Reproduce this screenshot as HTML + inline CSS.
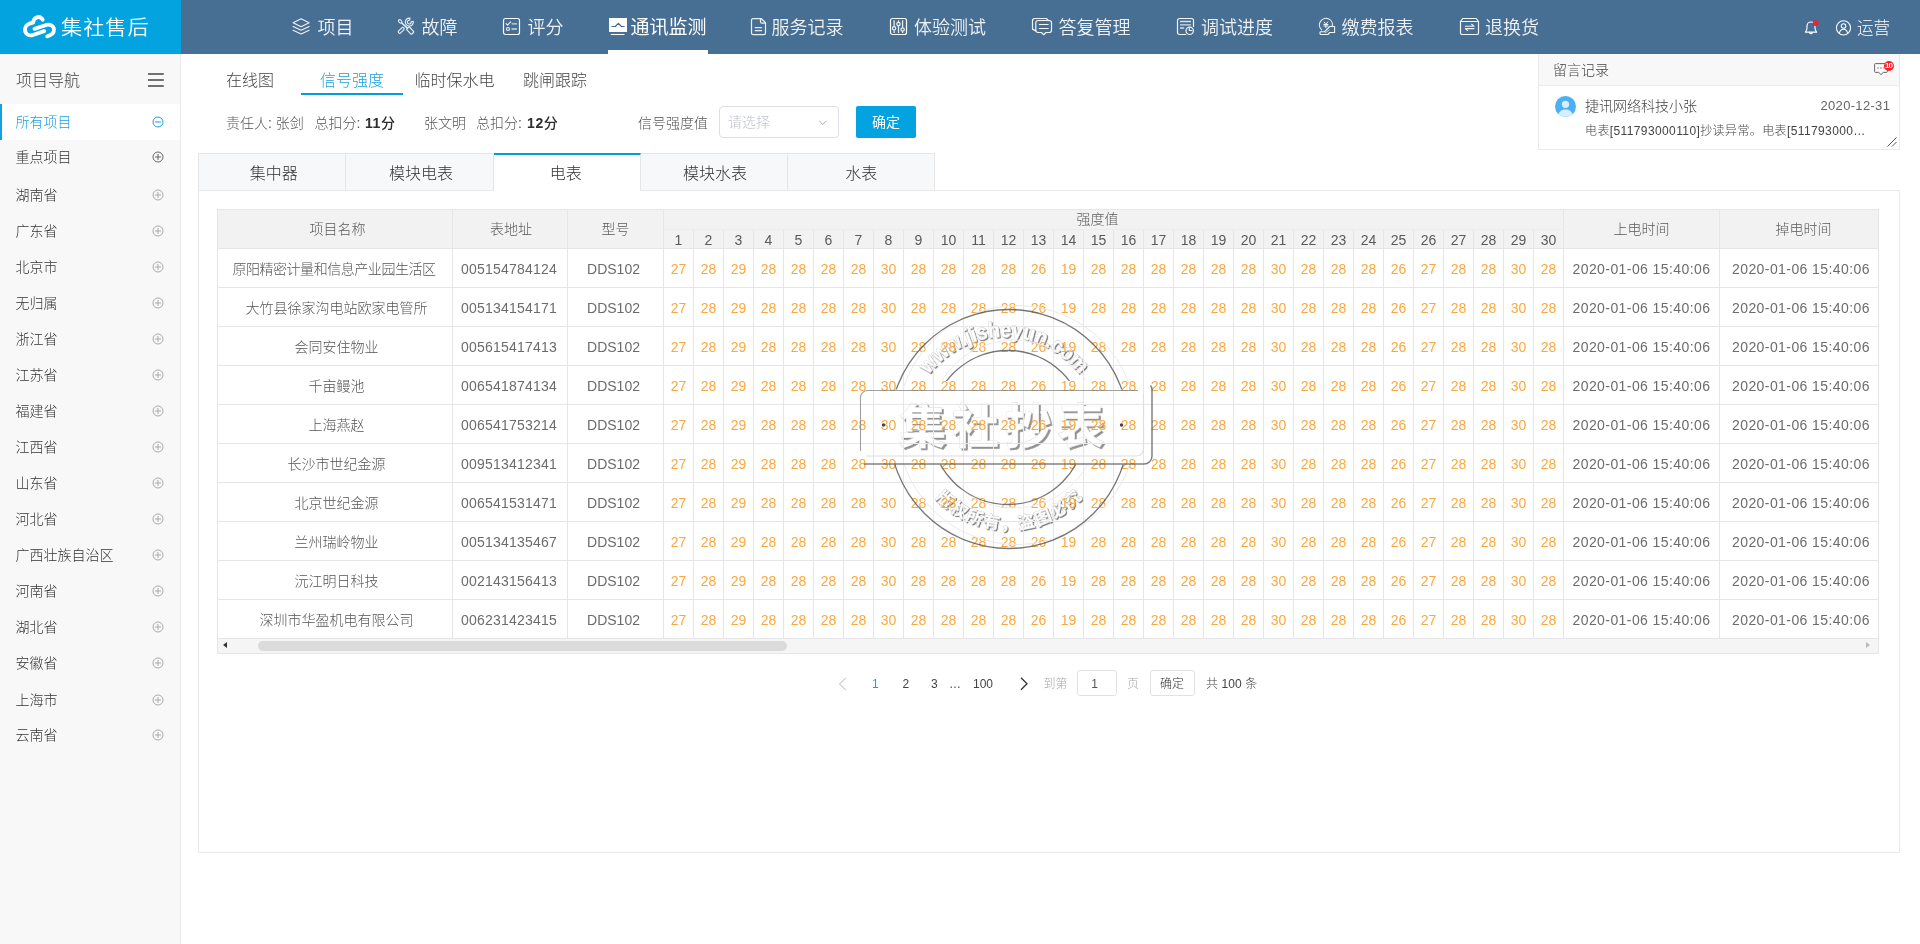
<!DOCTYPE html>
<html lang="zh-CN"><head><meta charset="utf-8"><title>集社售后 - 通讯监测 - 信号强度</title>
<style>
*{box-sizing:border-box;margin:0;padding:0}
html,body{width:1920px;height:944px;overflow:hidden;background:#fff}
body{position:relative;font-family:"Liberation Sans","Noto Sans CJK SC",sans-serif;font-size:14px;color:#333;-webkit-font-smoothing:antialiased}
svg{display:block}
i{font-style:normal;display:block}
/* header */
#hdr{position:absolute;left:0;top:0;width:1920px;height:54px;background:#476e93}
#logo{position:absolute;left:0;top:0;width:181px;height:54px;background:#03a3e0}
#logo svg{position:absolute;left:22px;top:14px}
#logo span{position:absolute;left:60.500px;top:1px;line-height:54px;font-size:20px;color:#fff;font-weight:350;letter-spacing:.9px;transform:scaleX(1.06);transform-origin:0 50%;white-space:nowrap;font-family:"Liberation Sans","Noto Sans CJK SC",sans-serif}
.ni{position:absolute;top:2px;height:52px;line-height:52px;font-size:18px;color:#eef2f6;white-space:nowrap;font-family:"Liberation Sans","Noto Sans CJK SC",sans-serif;font-weight:350}
.ni.on{font-size:19px;font-weight:400;color:#fff}
.nic{position:absolute;overflow:visible}
#nul{position:absolute;left:608px;top:50px;width:100px;height:4px;background:#fff}
/* sidebar */
#side{position:absolute;left:0;top:54px;width:181px;height:890px;background:#f8f8f8;border-right:1px solid #ebebeb}
.stitle{position:absolute;left:16px;top:2px;line-height:50px;font-size:16px;color:#444;font-family:"Liberation Sans","Noto Sans CJK SC",sans-serif;font-weight:300}
.burger{position:absolute;left:148px;top:18.700px}
.si{position:absolute;left:0;width:180px;height:36px;line-height:36px;font-size:14px;color:#333;font-family:"Liberation Sans","Noto Sans CJK SC",sans-serif;font-weight:300}
.si span{position:absolute;left:15.500px;top:0}
.si svg{position:absolute;left:151.5px;top:12px;stroke:#aaa}
.si.dk svg{stroke:#666}
.si.act{background:#fff;color:#1a9fe0;border-left:2px solid #0ea2e0}
.si.act span{left:13.500px}
.si.act svg{left:149.5px;stroke:#1a9fe0}
/* main */
#main{position:absolute;left:0;top:0;width:1920px;height:944px;pointer-events:none;will-change:transform}
.tabs1 span{position:absolute;top:66px;line-height:30px;font-size:16px;color:#444;white-space:nowrap;font-family:"Liberation Sans","Noto Sans CJK SC",sans-serif;font-weight:300}
.tabs1 span.on{color:#1a9fe0}
.tabs1 .ul{position:absolute;left:301px;top:93px;width:102px;height:2px;background:#039ddf}
.info span{position:absolute;top:108px;line-height:30px;font-size:14px;color:#555;white-space:nowrap;font-family:"Liberation Sans","Noto Sans CJK SC",sans-serif;font-weight:300}
.info b{color:#2e2e2e;font-weight:700;letter-spacing:.6px}
.sel{position:absolute;left:719px;top:106px;width:120px;height:32px;border:1px solid #dcdfe6;border-radius:4px;background:#fff}
.sel span{position:absolute;left:8px;top:0;line-height:30px;font-size:14px;color:#c0c4cc;font-weight:300}
.sel svg{position:absolute;left:98px;top:12.500px}
.btn{position:absolute;left:856px;top:106px;width:60px;height:32px;border-radius:2px;background:#02a3e0;color:#fff;font-size:14px;line-height:32px;text-align:center}
.tabs2{position:absolute;left:198px;top:153px;width:737px;height:38px;display:flex;border-left:1px solid #e6e6e6;border-top:1px solid #e6e6e6;background:#f7f8fa}
.tabs2 div{flex:0 0 147.300px;width:147.300px;height:37px;line-height:36px;padding-top:2px;text-align:center;font-size:16px;color:#333;border-right:1px solid #e6e6e6;font-family:"Liberation Sans","Noto Sans CJK SC",sans-serif;font-weight:300}
.tabs2 div.on{background:#fff;border-top:2px solid #039ddf;margin-top:-1px;height:38px;line-height:33px;position:relative;z-index:2}
.panel{position:absolute;left:198px;top:190px;width:1702px;height:663px;border:1px solid #e9e9e9}
/* table */
.tb{position:absolute;left:217px;top:209px;width:1661px;table-layout:fixed;border-collapse:collapse;border-spacing:0}
.tb th,.tb td{border:1px solid #e6e6e6;text-align:center;font-weight:300;white-space:nowrap;overflow:visible;padding:0}
.tb th{background:#f2f2f2;color:#5a5a5a;font-size:14px}
.tb .h1{height:20px}
.tb .h2{height:19px}
.tb .h1 th{line-height:19px}
.tb .h1 th.qd{border-bottom-color:#ececec;line-height:17px;padding-right:32px}
.tb .h2 th{line-height:16px;padding-top:2px;border-top:none}
.tb td{height:39px;line-height:36px;padding-top:2px;color:#6c6c6c;font-size:14px}
.tb td.v{color:#f9a93f}
.tb td.nm{color:#555;padding-left:3px}
.tb td.sq{letter-spacing:-.45px;padding-left:0;padding-right:2px}
.tb td.ad{letter-spacing:.22px;padding-right:2px}
.tb td.md{padding-right:4px}
.tb td.dt{letter-spacing:.42px}
.sbar{position:absolute;left:217px;top:639px;width:1662px;height:15px;background:#f5f5f5;border:1px solid #e6e6e6;border-top:none}
.sbar .thumb{position:absolute;left:40px;top:2px;width:529px;height:10px;border-radius:5px;background:#dbdbdb}
.sbar .la{position:absolute;left:5px;top:3px;border:3.5px solid transparent;border-right:4.5px solid #333;border-left:none}
.sbar .ra{position:absolute;left:1648px;top:3px;border:3.5px solid transparent;border-left:4.5px solid #bbb;border-right:none}
.pager span,.pager .ipt,.pager svg{position:absolute}
.pager span{top:672px;line-height:24px;font-size:12px;color:#444;white-space:nowrap;font-weight:300}
.pager span.cur{color:#1a9fe0}
.pager span.g{color:#aaa}
.pager .ipt{top:670px;height:26px;border:1px solid #e2e2e2;border-radius:3px;line-height:26px;text-align:center;font-size:12px;color:#555;font-weight:300}
/* message */
#msg{position:absolute;left:1538px;top:54px;width:362px;height:96px;border:1px solid #e9e9e9;border-top:none;background:#fff}
#msg .mh{height:32px;line-height:33px;background:#f8f8f8;border-bottom:1px solid #ebebeb;padding-left:14px;font-size:14px;color:#444;font-weight:300;font-family:"Liberation Sans","Noto Sans CJK SC",sans-serif}
#msg .chat{position:absolute;left:335px;top:9px}
#msg .badge{position:absolute;left:345px;top:7px;width:10px;height:10px;border-radius:5px;background:#f5222d;color:#fff;font-size:8px;font-weight:700;line-height:10.500px;text-align:center;letter-spacing:-.8px;text-indent:-.8px}
#msg .ava{position:absolute;left:16px;top:42px}
#msg .mn{position:absolute;left:46px;top:41px;line-height:22px;font-size:14px;color:#444;font-weight:300;white-space:nowrap}
#msg .md2{position:absolute;left:281.500px;top:41px;line-height:22px;font-size:13px;color:#666;font-weight:300;letter-spacing:.32px;white-space:nowrap}
#msg .mt{position:absolute;left:46px;top:67px;line-height:20px;font-size:12px;color:#444;font-weight:300;white-space:nowrap;letter-spacing:.39px}
#msg .rsz{position:absolute;right:2px;bottom:2px}

.tb th.c1{padding-left:5px}
.tb th.c2{padding-left:2px}
.tb th.c5{padding-left:9px}
.tb td.d2{padding-left:4px}
.tabs2 div.s1{text-indent:3px}
.tabs2 div.s3{text-indent:-2px}
.tabs2 div.s4{text-indent:2px}
.info b em{font-style:normal;font-weight:500}
#hdr,#side,#msg{will-change:transform}

</style></head>
<body>
<div id="hdr">
<div id="logo">
<svg width="36" height="26" viewBox="0 0 36 26"><g fill="none" stroke="#fff" stroke-width="3.800" stroke-linecap="round" stroke-linejoin="round"><path d="M20.600 5.700C19.400 3.400 17 2.700 14.900 3.300 12.600 4 11.300 6 11.100 8.500 7.200 9 3 11.400 3 15.600 3 20 7 22.400 11 21L22.200 17.100"/><path d="M12.500 14.900L23.500 11.200C27.500 9.800 32 11.600 32 15.600 32 19.300 29.200 21.400 25.200 22.300"/></g></svg>
<span>集社售后</span>
</div>
<!-- nav icons -->
<svg class="nic" style="left:292px;top:17px" width="18" height="18" viewBox="-0.1 -0.5 18 18"><g fill="none" stroke="#eef2f6" stroke-width="1.100" stroke-linejoin="round" stroke-linecap="round"><path d="M9 1.200L17 5.200 9 9.200 1 5.200z"/><path d="M1 8.900L9 12.700 17 8.900"/><path d="M1 12.700L9 16.500 17 12.700"/></g></svg>
<span class="ni" style="left:317.500px">项目</span>

<svg class="nic" style="left:397px;top:17px" width="18" height="18" viewBox="-0 -0.5 18 18"><g fill="none" stroke="#e9eef3" stroke-width="1.150" stroke-linejoin="round" stroke-linecap="round"><ellipse cx="3.200" cy="3.900" rx="2.100" ry="1.350" transform="rotate(45 3.200 3.900)"/><path d="M4.800 5.500L10.300 10.600" stroke-width="1.500"/><rect x="-3.600" y="-1.900" width="7.200" height="3.800" rx=".8" transform="translate(13.200 13.100) rotate(47)"/><rect x="-3.500" y="-1.400" width="7" height="2.800" rx="1.300" transform="translate(4.200 12.900) rotate(-45)"/><path d="M16.240 3.910A4 4 0 1 1 12.990 .660L12.630 2.730A1.900 1.900 0 1 0 14.170 4.270z"/></g></svg>
<span class="ni" style="left:421.500px">故障</span>

<svg class="nic" style="left:502px;top:17px" width="18" height="18" viewBox="-0.5 -0.5 18 18"><g fill="none" stroke="#e9eef3" stroke-width="1.25" stroke-linejoin="round" stroke-linecap="round"><rect x="1" y="1" width="16" height="16" rx="2" stroke="#fff" stroke-width="1.200"/><path d="M3.600 6.200l1.400 1.400 3.100-3.200" stroke-width="1.200"/><path d="M9 6.300h5.400M9 11.500h5.400" stroke-linecap="butt" stroke-width="1.300" opacity=".85"/><circle cx="5.500" cy="11.500" r="1.500" stroke-width="1.200"/></g></svg>
<span class="ni" style="left:527.500px">评分</span>

<svg class="nic" style="left:609px;top:17px" width="18" height="18" viewBox="-0 -0.5 18 18"><rect x="0" y=".5" width="18" height="14" fill="#fff"/><path d="M3 9h3.300l3.100-3.200 3.100 3.200h2.700" fill="none" stroke="#41688e" stroke-width="1.200" stroke-linecap="round" stroke-linejoin="round"/><path d="M1.800 17h13.700" stroke="#fff" stroke-width="1.100"/></svg>
<span class="ni on" style="left:630.500px">通讯监测</span>
<i id="nul"></i>

<svg class="nic" style="left:750px;top:17px" width="18" height="18" viewBox="-0 -0.5 18 18"><g fill="none" stroke="#e9eef3" stroke-width="1.25" stroke-linejoin="round" stroke-linecap="round"><path d="M3.100 1h8.100l4.300 4.300V15.400a1.600 1.600 0 0 1-1.600 1.600H3.100a1.600 1.600 0 0 1-1.600-1.600V2.600A1.600 1.600 0 0 1 3.100 1z"/><path d="M10.500 1.200v3a1.300 1.300 0 0 0 1.300 1.300h3.400"/><path d="M4.800 10h7.300M4.800 13h7.300" stroke-linecap="butt"/></g></svg>
<span class="ni" style="left:771.500px">服务记录</span>

<svg class="nic" style="left:889px;top:17px" width="18" height="18" viewBox="-0.5 -0.5 18 18"><g fill="none" stroke="#eef2f6" stroke-width="1.200" stroke-linejoin="round" stroke-linecap="round"><rect x="1" y="1" width="16" height="16" rx="2" stroke="#fff"/><path d="M4.600 2.800v6M4.600 12.800v2.800M9 2.800v1.800M9 8.600v7M13.100 2.800v7.200M13.100 14v1.600" stroke-linecap="butt"/><circle cx="4.600" cy="10.800" r="1.700"/><circle cx="9" cy="6.600" r="1.700"/><circle cx="13.100" cy="12" r="1.700"/></g></svg>
<span class="ni" style="left:914px">体验测试</span>

<svg class="nic" style="left:1031px;top:17px" width="22" height="18" viewBox="-0 -0.5 22 18"><g fill="none" stroke="#f2f5f8" stroke-width="1.200" stroke-linejoin="round" stroke-linecap="round"><path d="M4.800 13.400L1.500 11.600V3.200A2.200 2.200 0 0 1 3.700 1H15.400L17.400 3"/><path d="M7 3H18.300A2.200 2.200 0 0 1 20.500 5.200V12.800A2.200 2.200 0 0 1 18.300 15H15L12.700 17.200 10.400 15H7A2.200 2.200 0 0 1 4.800 12.800V5.200A2.200 2.200 0 0 1 7 3z"/><path d="M7.900 7h9.700M7.900 11h9.700" stroke-linecap="butt"/></g></svg>
<span class="ni" style="left:1058.500px">答复管理</span>

<svg class="nic" style="left:1176px;top:17px" width="18" height="18" viewBox="-0.5 -0.5 18 18"><g fill="none" stroke="#f2f5f8" stroke-width="1.200" stroke-linejoin="round" stroke-linecap="round"><path d="M9.200 17H3a2 2 0 0 1-2-2V3a2 2 0 0 1 2-2h12a2 2 0 0 1 2 2v6"/><path d="M3.500 4h11M3.500 7.300h11M3.500 10.500h4.200" stroke-linecap="butt" stroke-width="1.300" opacity=".85"/><circle cx="13.200" cy="13.300" r="3.700"/><path d="M12.800 10.900v2.100h2.600" stroke-width="1.100"/></g></svg>
<span class="ni" style="left:1201px">调试进度</span>

<svg class="nic" style="left:1318px;top:17px" width="18" height="18" viewBox="-0.5 -0.5 18 18"><g fill="none" stroke="#f2f5f8" stroke-width="1.100" stroke-linejoin="round" stroke-linecap="round"><path d="M13.800 8.700A6.500 6.500 0 1 0 3.200 12.300"/><path d="M5.600 4.600L7.400 6.900 9.200 4.600M5.400 7h4M5.400 8.500h4M7.400 7v3.300" stroke-width="1"/><path d="M16.100 9H11.200L6.200 14.200H2.400a.9.9 0 0 0-.9.9v1a.9.9 0 0 0 .9.900H9.400L11.300 15H16.100z"/><path d="M6.800 15.400L10.600 12.600" stroke-width=".9" opacity=".8"/></g></svg>
<span class="ni" style="left:1341.500px">缴费报表</span>

<svg class="nic" style="left:1459px;top:17px" width="20" height="18" viewBox="-0.5 -0.5 20 18"><g fill="none" stroke="#f2f5f8" stroke-width="1.200" stroke-linejoin="round" stroke-linecap="round"><path d="M1 4L3.200 1H16.800L19 4"/><path d="M1 4H19V15.400a1.600 1.600 0 0 1-1.600 1.600H2.600A1.600 1.600 0 0 1 1 15.400z"/><path d="M5.800 8.700h8.700l-2.400-1.900M14.500 11.100H5.800l2.400 1.900" stroke-width="1.100"/></g></svg>
<span class="ni" style="left:1485px">退换货</span>

<!-- right -->
<svg class="nic" style="left:1803px;top:19px" width="16" height="17" viewBox="-0.5 -0.5 16 17"><g fill="none" stroke="#fff" stroke-width="1.150" stroke-linejoin="round" stroke-linecap="round"><path d="M1.800 12.600c1.300-1.100 1.700-2.200 1.700-4.300V6.500a4 4 0 0 1 8 0v1.800c0 2.100.4 3.200 1.700 4.300z"/><path d="M6.100 13.200a1.500 1.500 0 0 0 2.800 0"/></g><circle cx="12.200" cy="3.700" r="2.900" fill="#f5222d"/></svg>
<svg class="nic" style="left:1835px;top:19px" width="16" height="16" viewBox="-0.5 -0.8 16 16"><g fill="none" stroke="#fff" stroke-width="1.050" stroke-linejoin="round" stroke-linecap="round"><circle cx="8" cy="8" r="7.100"/><circle cx="8" cy="6.200" r="2.300"/><path d="M3.900 13.600c.4-2.600 2-4.200 4.100-4.200s3.700 1.600 4.100 4.200"/></g></svg>
<span class="ni" style="left:1857px;font-size:16.500px;color:#fff;font-weight:300;line-height:52px">运营</span>
</div>
<div id="side">
<div class="stitle">项目导航</div>
<svg class="burger" width="16" height="14" viewBox="0 0 16 14"><path d="M0 1h15.800M0 7h15.800M0 13h15.800" stroke="#444" stroke-width="1.500" fill="none"/></svg>
<div class="si act" style="top:50px"><span>所有项目</span><svg width="12" height="12" viewBox="0 0 12 12"><circle cx="6" cy="6" r="5" fill="none" stroke-width="1"/><path d="M3 6h6" stroke-width="1" fill="none"/></svg></div>
<div class="si dk" style="top:85px"><span>重点项目</span><svg width="12" height="12" viewBox="0 0 12 12"><circle cx="6" cy="6" r="5" fill="none" stroke-width="1"/><path d="M3 6h6M6 3v6" stroke-width="1" fill="none"/></svg></div>
<div class="si" style="top:123px"><span>湖南省</span><svg width="12" height="12" viewBox="0 0 12 12"><circle cx="6" cy="6" r="5" fill="none" stroke-width="1"/><path d="M3 6h6M6 3v6" stroke-width="1" fill="none"/></svg></div>
<div class="si" style="top:159px"><span>广东省</span><svg width="12" height="12" viewBox="0 0 12 12"><circle cx="6" cy="6" r="5" fill="none" stroke-width="1"/><path d="M3 6h6M6 3v6" stroke-width="1" fill="none"/></svg></div>
<div class="si" style="top:195px"><span>北京市</span><svg width="12" height="12" viewBox="0 0 12 12"><circle cx="6" cy="6" r="5" fill="none" stroke-width="1"/><path d="M3 6h6M6 3v6" stroke-width="1" fill="none"/></svg></div>
<div class="si" style="top:231px"><span>无归属</span><svg width="12" height="12" viewBox="0 0 12 12"><circle cx="6" cy="6" r="5" fill="none" stroke-width="1"/><path d="M3 6h6M6 3v6" stroke-width="1" fill="none"/></svg></div>
<div class="si" style="top:267px"><span>浙江省</span><svg width="12" height="12" viewBox="0 0 12 12"><circle cx="6" cy="6" r="5" fill="none" stroke-width="1"/><path d="M3 6h6M6 3v6" stroke-width="1" fill="none"/></svg></div>
<div class="si" style="top:303px"><span>江苏省</span><svg width="12" height="12" viewBox="0 0 12 12"><circle cx="6" cy="6" r="5" fill="none" stroke-width="1"/><path d="M3 6h6M6 3v6" stroke-width="1" fill="none"/></svg></div>
<div class="si" style="top:339px"><span>福建省</span><svg width="12" height="12" viewBox="0 0 12 12"><circle cx="6" cy="6" r="5" fill="none" stroke-width="1"/><path d="M3 6h6M6 3v6" stroke-width="1" fill="none"/></svg></div>
<div class="si" style="top:375px"><span>江西省</span><svg width="12" height="12" viewBox="0 0 12 12"><circle cx="6" cy="6" r="5" fill="none" stroke-width="1"/><path d="M3 6h6M6 3v6" stroke-width="1" fill="none"/></svg></div>
<div class="si" style="top:411px"><span>山东省</span><svg width="12" height="12" viewBox="0 0 12 12"><circle cx="6" cy="6" r="5" fill="none" stroke-width="1"/><path d="M3 6h6M6 3v6" stroke-width="1" fill="none"/></svg></div>
<div class="si" style="top:447px"><span>河北省</span><svg width="12" height="12" viewBox="0 0 12 12"><circle cx="6" cy="6" r="5" fill="none" stroke-width="1"/><path d="M3 6h6M6 3v6" stroke-width="1" fill="none"/></svg></div>
<div class="si" style="top:483px"><span>广西壮族自治区</span><svg width="12" height="12" viewBox="0 0 12 12"><circle cx="6" cy="6" r="5" fill="none" stroke-width="1"/><path d="M3 6h6M6 3v6" stroke-width="1" fill="none"/></svg></div>
<div class="si" style="top:519px"><span>河南省</span><svg width="12" height="12" viewBox="0 0 12 12"><circle cx="6" cy="6" r="5" fill="none" stroke-width="1"/><path d="M3 6h6M6 3v6" stroke-width="1" fill="none"/></svg></div>
<div class="si" style="top:555px"><span>湖北省</span><svg width="12" height="12" viewBox="0 0 12 12"><circle cx="6" cy="6" r="5" fill="none" stroke-width="1"/><path d="M3 6h6M6 3v6" stroke-width="1" fill="none"/></svg></div>
<div class="si" style="top:591px"><span>安徽省</span><svg width="12" height="12" viewBox="0 0 12 12"><circle cx="6" cy="6" r="5" fill="none" stroke-width="1"/><path d="M3 6h6M6 3v6" stroke-width="1" fill="none"/></svg></div>
<div class="si" style="top:627.5px"><span>上海市</span><svg width="12" height="12" viewBox="0 0 12 12"><circle cx="6" cy="6" r="5" fill="none" stroke-width="1"/><path d="M3 6h6M6 3v6" stroke-width="1" fill="none"/></svg></div>
<div class="si" style="top:663px"><span>云南省</span><svg width="12" height="12" viewBox="0 0 12 12"><circle cx="6" cy="6" r="5" fill="none" stroke-width="1"/><path d="M3 6h6M6 3v6" stroke-width="1" fill="none"/></svg></div>
</div>
<div id="main">
<div class="tabs1">
<span style="left:226px">在线图</span><span class="on" style="left:320px">信号强度</span><span style="left:414.5px">临时保水电</span><span style="left:523px">跳闸跟踪</span>
<i class="ul"></i>
</div>
<div class="info">
<span style="left:226px">责任人: 张剑</span><span style="left:314.5px">总扣分:</span><span style="left:365px"><b>11<em>分</em></b></span><span style="left:424px">张文明</span><span style="left:476px">总扣分:</span><span style="left:527px"><b>12<em>分</em></b></span>
<span style="left:638px">信号强度值</span>
</div>
<div class="sel"><span>请选择</span><svg width="10" height="6" viewBox="0 0 10 6"><path d="M1.200 .8l3.600 3.600 3.600-3.600" fill="none" stroke="#a4a9b2" stroke-width="1"/></svg></div>
<div class="btn">确定</div>
<div class="tabs2"><div class="s1">集中器</div><div class="s1">模块电表</div><div class="on s3">电表</div><div class="s4">模块水表</div><div>水表</div></div>
<div class="panel"></div>
<svg id="wma" style="position:absolute;left:850px;top:290px" width="320" height="280" viewBox="850 290 320 280">
<defs>
<path id="arcT" d="M 910 431 A 94 94 0 0 1 1098 431"/>
<path id="arcB" d="M 908 429 A 100.500 100.500 0 0 0 1109 429"/>
<filter id="emb" x="-5%" y="-10%" width="110%" height="125%"><feDropShadow dx="1.900" dy="1.900" stdDeviation=".7" flood-color="#222" flood-opacity=".5"/></filter>
<filter id="emb2" x="-10%" y="-10%" width="120%" height="125%"><feDropShadow dx="1.100" dy="1.100" stdDeviation=".5" flood-color="#222" flood-opacity=".6"/></filter>
</defs>
<g filter="url(#emb)" fill="#fff" stroke="#d4d4d4" stroke-width=".7" paint-order="stroke">
<text x="899" y="442.500" font-size="47" font-weight="700" letter-spacing="5.800" font-family="'Liberation Sans','Noto Sans CJK SC',sans-serif">集社抄表</text>
</g>
<g filter="url(#emb2)" fill="#fff" stroke="#c4c4c4" stroke-width=".7" paint-order="stroke">
<text font-size="22" font-weight="700" font-family="'Liberation Sans',sans-serif"><textPath href="#arcT" startOffset="50%" text-anchor="middle" textLength="174" lengthAdjust="spacingAndGlyphs">www.jisheyun.com</textPath></text>
<text font-size="16.500" font-weight="700" letter-spacing="2" font-family="'Liberation Sans','Noto Sans CJK SC',sans-serif"><textPath href="#arcB" startOffset="50.500%" text-anchor="middle">版权所有，盗图必究</textPath></text>
</g>
</svg>
<table class="tb" cellspacing="0" cellpadding="0">
<colgroup><col style="width:235px"><col style="width:115px"><col style="width:96px"><col style="width:30px"><col style="width:30px"><col style="width:30px"><col style="width:30px"><col style="width:30px"><col style="width:30px"><col style="width:30px"><col style="width:30px"><col style="width:30px"><col style="width:30px"><col style="width:30px"><col style="width:30px"><col style="width:30px"><col style="width:30px"><col style="width:30px"><col style="width:30px"><col style="width:30px"><col style="width:30px"><col style="width:30px"><col style="width:30px"><col style="width:30px"><col style="width:30px"><col style="width:30px"><col style="width:30px"><col style="width:30px"><col style="width:30px"><col style="width:30px"><col style="width:30px"><col style="width:30px"><col style="width:30px"><col style="width:156px"><col style="width:159px"></colgroup>
<thead><tr class="h1"><th rowspan="2" class="c1">项目名称</th><th rowspan="2" class="c2">表地址</th><th rowspan="2">型号</th><th colspan="30" class="qd">强度值</th><th rowspan="2">上电时间</th><th rowspan="2" class="c5">掉电时间</th></tr>
<tr class="h2"><th>1</th><th>2</th><th>3</th><th>4</th><th>5</th><th>6</th><th>7</th><th>8</th><th>9</th><th>10</th><th>11</th><th>12</th><th>13</th><th>14</th><th>15</th><th>16</th><th>17</th><th>18</th><th>19</th><th>20</th><th>21</th><th>22</th><th>23</th><th>24</th><th>25</th><th>26</th><th>27</th><th>28</th><th>29</th><th>30</th></tr></thead>
<tbody>
<tr><td class="nm sq">原阳精密计量和信息产业园生活区</td><td class="ad">005154784124</td><td class="md">DDS102</td><td class="v">27</td><td class="v">28</td><td class="v">29</td><td class="v">28</td><td class="v">28</td><td class="v">28</td><td class="v">28</td><td class="v">30</td><td class="v">28</td><td class="v">28</td><td class="v">28</td><td class="v">28</td><td class="v">26</td><td class="v">19</td><td class="v">28</td><td class="v">28</td><td class="v">28</td><td class="v">28</td><td class="v">28</td><td class="v">28</td><td class="v">30</td><td class="v">28</td><td class="v">28</td><td class="v">28</td><td class="v">26</td><td class="v">27</td><td class="v">28</td><td class="v">28</td><td class="v">30</td><td class="v">28</td><td class="dt">2020-01-06 15:40:06</td><td class="dt d2">2020-01-06 15:40:06</td></tr>
<tr><td class="nm">大竹县徐家沟电站欧家电管所</td><td class="ad">005134154171</td><td class="md">DDS102</td><td class="v">27</td><td class="v">28</td><td class="v">29</td><td class="v">28</td><td class="v">28</td><td class="v">28</td><td class="v">28</td><td class="v">30</td><td class="v">28</td><td class="v">28</td><td class="v">28</td><td class="v">28</td><td class="v">26</td><td class="v">19</td><td class="v">28</td><td class="v">28</td><td class="v">28</td><td class="v">28</td><td class="v">28</td><td class="v">28</td><td class="v">30</td><td class="v">28</td><td class="v">28</td><td class="v">28</td><td class="v">26</td><td class="v">27</td><td class="v">28</td><td class="v">28</td><td class="v">30</td><td class="v">28</td><td class="dt">2020-01-06 15:40:06</td><td class="dt d2">2020-01-06 15:40:06</td></tr>
<tr><td class="nm">会同安住物业</td><td class="ad">005615417413</td><td class="md">DDS102</td><td class="v">27</td><td class="v">28</td><td class="v">29</td><td class="v">28</td><td class="v">28</td><td class="v">28</td><td class="v">28</td><td class="v">30</td><td class="v">28</td><td class="v">28</td><td class="v">28</td><td class="v">28</td><td class="v">26</td><td class="v">19</td><td class="v">28</td><td class="v">28</td><td class="v">28</td><td class="v">28</td><td class="v">28</td><td class="v">28</td><td class="v">30</td><td class="v">28</td><td class="v">28</td><td class="v">28</td><td class="v">26</td><td class="v">27</td><td class="v">28</td><td class="v">28</td><td class="v">30</td><td class="v">28</td><td class="dt">2020-01-06 15:40:06</td><td class="dt d2">2020-01-06 15:40:06</td></tr>
<tr><td class="nm">千亩鳗池</td><td class="ad">006541874134</td><td class="md">DDS102</td><td class="v">27</td><td class="v">28</td><td class="v">29</td><td class="v">28</td><td class="v">28</td><td class="v">28</td><td class="v">28</td><td class="v">30</td><td class="v">28</td><td class="v">28</td><td class="v">28</td><td class="v">28</td><td class="v">26</td><td class="v">19</td><td class="v">28</td><td class="v">28</td><td class="v">28</td><td class="v">28</td><td class="v">28</td><td class="v">28</td><td class="v">30</td><td class="v">28</td><td class="v">28</td><td class="v">28</td><td class="v">26</td><td class="v">27</td><td class="v">28</td><td class="v">28</td><td class="v">30</td><td class="v">28</td><td class="dt">2020-01-06 15:40:06</td><td class="dt d2">2020-01-06 15:40:06</td></tr>
<tr><td class="nm">上海燕赵</td><td class="ad">006541753214</td><td class="md">DDS102</td><td class="v">27</td><td class="v">28</td><td class="v">29</td><td class="v">28</td><td class="v">28</td><td class="v">28</td><td class="v">28</td><td class="v">30</td><td class="v">28</td><td class="v">28</td><td class="v">28</td><td class="v">28</td><td class="v">26</td><td class="v">19</td><td class="v">28</td><td class="v">28</td><td class="v">28</td><td class="v">28</td><td class="v">28</td><td class="v">28</td><td class="v">30</td><td class="v">28</td><td class="v">28</td><td class="v">28</td><td class="v">26</td><td class="v">27</td><td class="v">28</td><td class="v">28</td><td class="v">30</td><td class="v">28</td><td class="dt">2020-01-06 15:40:06</td><td class="dt d2">2020-01-06 15:40:06</td></tr>
<tr><td class="nm">长沙市世纪金源</td><td class="ad">009513412341</td><td class="md">DDS102</td><td class="v">27</td><td class="v">28</td><td class="v">29</td><td class="v">28</td><td class="v">28</td><td class="v">28</td><td class="v">28</td><td class="v">30</td><td class="v">28</td><td class="v">28</td><td class="v">28</td><td class="v">28</td><td class="v">26</td><td class="v">19</td><td class="v">28</td><td class="v">28</td><td class="v">28</td><td class="v">28</td><td class="v">28</td><td class="v">28</td><td class="v">30</td><td class="v">28</td><td class="v">28</td><td class="v">28</td><td class="v">26</td><td class="v">27</td><td class="v">28</td><td class="v">28</td><td class="v">30</td><td class="v">28</td><td class="dt">2020-01-06 15:40:06</td><td class="dt d2">2020-01-06 15:40:06</td></tr>
<tr><td class="nm">北京世纪金源</td><td class="ad">006541531471</td><td class="md">DDS102</td><td class="v">27</td><td class="v">28</td><td class="v">29</td><td class="v">28</td><td class="v">28</td><td class="v">28</td><td class="v">28</td><td class="v">30</td><td class="v">28</td><td class="v">28</td><td class="v">28</td><td class="v">28</td><td class="v">26</td><td class="v">19</td><td class="v">28</td><td class="v">28</td><td class="v">28</td><td class="v">28</td><td class="v">28</td><td class="v">28</td><td class="v">30</td><td class="v">28</td><td class="v">28</td><td class="v">28</td><td class="v">26</td><td class="v">27</td><td class="v">28</td><td class="v">28</td><td class="v">30</td><td class="v">28</td><td class="dt">2020-01-06 15:40:06</td><td class="dt d2">2020-01-06 15:40:06</td></tr>
<tr><td class="nm">兰州瑞岭物业</td><td class="ad">005134135467</td><td class="md">DDS102</td><td class="v">27</td><td class="v">28</td><td class="v">29</td><td class="v">28</td><td class="v">28</td><td class="v">28</td><td class="v">28</td><td class="v">30</td><td class="v">28</td><td class="v">28</td><td class="v">28</td><td class="v">28</td><td class="v">26</td><td class="v">19</td><td class="v">28</td><td class="v">28</td><td class="v">28</td><td class="v">28</td><td class="v">28</td><td class="v">28</td><td class="v">30</td><td class="v">28</td><td class="v">28</td><td class="v">28</td><td class="v">26</td><td class="v">27</td><td class="v">28</td><td class="v">28</td><td class="v">30</td><td class="v">28</td><td class="dt">2020-01-06 15:40:06</td><td class="dt d2">2020-01-06 15:40:06</td></tr>
<tr><td class="nm">沅江明日科技</td><td class="ad">002143156413</td><td class="md">DDS102</td><td class="v">27</td><td class="v">28</td><td class="v">29</td><td class="v">28</td><td class="v">28</td><td class="v">28</td><td class="v">28</td><td class="v">30</td><td class="v">28</td><td class="v">28</td><td class="v">28</td><td class="v">28</td><td class="v">26</td><td class="v">19</td><td class="v">28</td><td class="v">28</td><td class="v">28</td><td class="v">28</td><td class="v">28</td><td class="v">28</td><td class="v">30</td><td class="v">28</td><td class="v">28</td><td class="v">28</td><td class="v">26</td><td class="v">27</td><td class="v">28</td><td class="v">28</td><td class="v">30</td><td class="v">28</td><td class="dt">2020-01-06 15:40:06</td><td class="dt d2">2020-01-06 15:40:06</td></tr>
<tr><td class="nm">深圳市华盈机电有限公司</td><td class="ad">006231423415</td><td class="md">DDS102</td><td class="v">27</td><td class="v">28</td><td class="v">29</td><td class="v">28</td><td class="v">28</td><td class="v">28</td><td class="v">28</td><td class="v">30</td><td class="v">28</td><td class="v">28</td><td class="v">28</td><td class="v">28</td><td class="v">26</td><td class="v">19</td><td class="v">28</td><td class="v">28</td><td class="v">28</td><td class="v">28</td><td class="v">28</td><td class="v">28</td><td class="v">30</td><td class="v">28</td><td class="v">28</td><td class="v">28</td><td class="v">26</td><td class="v">27</td><td class="v">28</td><td class="v">28</td><td class="v">30</td><td class="v">28</td><td class="dt">2020-01-06 15:40:06</td><td class="dt d2">2020-01-06 15:40:06</td></tr>
</tbody></table>
<div class="sbar"><i class="la"></i><i class="thumb"></i><i class="ra"></i></div>
<div class="pager">
<svg style="left:838px;top:677px" width="9" height="14" viewBox="0 0 9 14"><path d="M8 1L1.5 7 8 13" fill="none" stroke="#d2d2d2" stroke-width="1.2"/></svg>
<span class="cur" style="left:872px">1</span><span style="left:902.5px">2</span><span style="left:931px">3</span><span style="left:949px;letter-spacing:1px">…</span><span style="left:973px">100</span>
<svg style="left:1019.5px;top:677px" width="9" height="14" viewBox="0 0 9 14"><path d="M1 .8l6 6-6 6" fill="none" stroke="#333" stroke-width="1.3"/></svg>
<span class="g" style="left:1043.5px">到第</span>
<div class="ipt" style="left:1077px;width:40px;padding-right:5px">1</div>
<span class="g" style="left:1127px">页</span>
<div class="ipt" style="left:1149.5px;width:45px;color:#333">确定</div>
<span style="left:1206px;letter-spacing:.1px">共 100 条</span>
</div>
<svg id="wm" style="position:absolute;left:850px;top:290px" width="320" height="280" viewBox="850 290 320 280">
<defs>
<clipPath id="cpO"><rect x="850" y="290" width="320" height="99.500"/><rect x="850" y="464.500" width="320" height="110"/></clipPath>
<clipPath id="cpI"><rect x="850" y="290" width="320" height="91"/><rect x="850" y="464.500" width="320" height="110"/></clipPath>
</defs>
<g fill="none">
<g clip-path="url(#cpO)">
<circle cx="1017" cy="425" r="119.500" stroke="#e9e9e9" stroke-width="1"/>
<circle cx="1009" cy="429" r="119.500" stroke="#555" stroke-width="1.300" opacity=".8"/>
</g>
<g clip-path="url(#cpI)">
<circle cx="1014" cy="424" r="84" stroke="#ececec" stroke-width="1"/>
<circle cx="1008" cy="427.500" r="77" stroke="#555" stroke-width="1.300" opacity=".8"/>
</g>
<path d="M1143.500 394V449a7 7 0 0 1-7 7H866" stroke="#dedede" stroke-width="1.200"/>
<path d="M860.500 451V397.500a7 7 0 0 1 7-7H1138" stroke="#777" stroke-width="1.100" opacity=".7"/>
<path d="M1150.500 385.500q1.500 1.500 1.500 4V456a8 8 0 0 1-8 8H864" stroke="#555" stroke-width="1.500" opacity=".75"/>
</g>
<g fill="#444"><circle cx="883.500" cy="425" r="1.700"/><circle cx="1121.500" cy="425" r="1.700"/></g>
</svg>
</div>
<div id="msg">
<div class="mh">留言记录</div>
<svg class="chat" width="15" height="13" viewBox="0 0 15 13"><path d="M1.5 0.6h11a0.9 0.9 0 0 1 .9.9v7a.9.9 0 0 1-.9.9H9.3L7 11.6 4.7 9.4H1.5a.9.9 0 0 1-.9-.9v-7a.9.9 0 0 1 .9-.9z" fill="none" stroke="#666" stroke-width="1"/><circle cx="4" cy="5" r=".75" fill="#777"/><circle cx="7" cy="5" r=".75" fill="#777"/><circle cx="10" cy="5" r=".75" fill="#777"/></svg>
<div class="badge">10</div>
<svg class="ava" width="21" height="21" viewBox="0 0 21 21"><defs><clipPath id="avc"><circle cx="10.5" cy="10.5" r="10.5"/></clipPath></defs><circle cx="10.5" cy="10.5" r="10.5" fill="#4cb0f6"/><g clip-path="url(#avc)" fill="#d8eefe"><circle cx="10.5" cy="8.3" r="3.6"/><path d="M3 21c0-5 3.2-7.6 7.5-7.6S18 16 18 21z"/></g></svg>
<div class="mn">捷讯网络科技小张</div>
<div class="md2">2020-12-31</div>
<div class="mt">电表[511793000110]抄读异常。电表[511793000…</div>
<svg class="rsz" width="10" height="10" viewBox="0 0 10 10"><path d="M9.5 0.5L.5 9.5M9.5 5L5 9.5" stroke="#555" stroke-width="1" fill="none"/></svg>
</div>
</body></html>
